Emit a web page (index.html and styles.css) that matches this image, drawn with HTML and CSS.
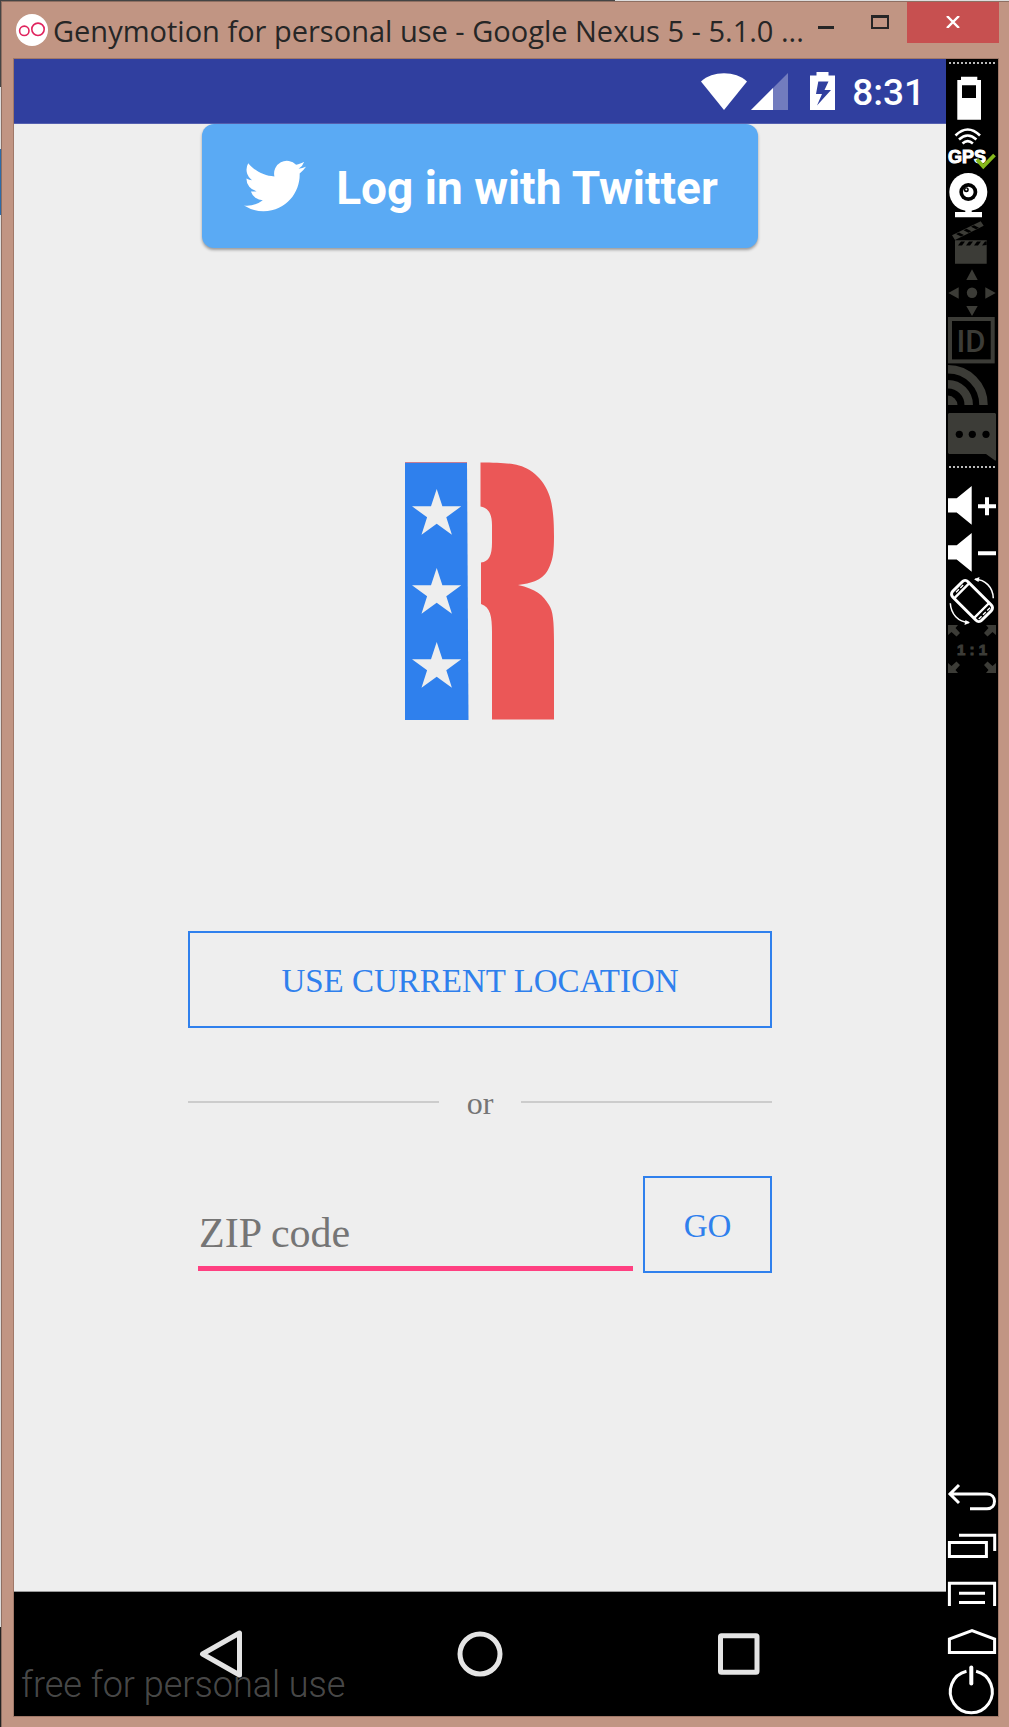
FILE: index.html
```html
<!DOCTYPE html>
<html lang="en">
<head>
<meta charset="utf-8">
<meta name="viewport" content="width=device-width, initial-scale=1">
<title>Genymotion for personal use - Google Nexus 5 - 5.1.0</title>
<link rel="stylesheet" href="styles.css">
</head>
<body>
<div class="window">
  <header class="titlebar">
    <svg class="app-icon" viewBox="0 0 32 32" aria-hidden="true">
      <circle cx="16" cy="16" r="16" fill="#fff"/>
      <g fill="none" stroke="#e0245e" stroke-width="1.6"><circle cx="8.3" cy="16.8" r="4.7"/><circle cx="22" cy="15.3" r="6.2"/></g>
    </svg>
    <h1 class="title">Genymotion for personal use - Google Nexus 5 - 5.1.0 ...</h1>
    <div class="controls">
      <button class="control minimize" aria-label="Minimize"><svg width="16" height="3" viewBox="0 0 16 3"><path d="M0 0h16v3H0z" fill="#262626"/></svg></button>
      <button class="control maximize" aria-label="Maximize"><svg width="18" height="14" viewBox="0 0 18 14"><path fill-rule="evenodd" d="M0 0h18v14H0zM2 3v9h14V3z" fill="#262626"/></svg></button>
      <button class="control close" aria-label="Close"><svg width="14" height="12" viewBox="0 0 14 12"><path d="M1 0l12 12M13 0L1 12" stroke="#fff" stroke-width="2.4"/></svg></button>
    </div>
  </header>

  <div class="device">
    <div class="screen">
      <div class="statusbar">
        <svg class="wifi" width="46" height="37" viewBox="0 0 46 37" aria-hidden="true"><path d="M23 37L0 8.5C6 3 14 .3 23 .3S40 3 46 8.500z" fill="#fff"/></svg>
        <svg class="signal" width="37" height="37" viewBox="0 0 37 37" aria-hidden="true"><path d="M0 37L37 0v37z" fill="#fff" opacity=".32"/><path d="M0 37L22 15v22z" fill="#fff"/></svg>
        <svg class="battery" width="25" height="38" viewBox="0 0 25 38" aria-hidden="true"><path fill-rule="evenodd" d="M6.500 0h12v3.500H25V38H0V3.500h6.500zM8.300 9.500L6 22h6L7 33.500 21 18h-6.500l4-8.500z" fill="#fff"/></svg>
        <time class="clock">8:31</time>
      </div>

      <main class="app">
        <button class="twitter">
          <svg class="bird" viewBox="0 0 24 24" aria-hidden="true"><path fill="#fff" d="M23.953 4.570a10 10 0 01-2.825.775 4.958 4.958 0 002.163-2.723c-.951.555-2.005.959-3.127 1.184a4.920 4.920 0 00-8.384 4.482C7.690 8.095 4.067 6.130 1.640 3.162a4.822 4.822 0 00-.666 2.475c0 1.710.870 3.213 2.188 4.096a4.904 4.904 0 01-2.228-.616v.060a4.923 4.923 0 003.946 4.827 4.996 4.996 0 01-2.212.085 4.936 4.936 0 004.604 3.417 9.867 9.867 0 01-6.102 2.105c-.390 0-.779-.023-1.170-.067a13.995 13.995 0 007.557 2.209c9.053 0 13.998-7.496 13.998-13.985 0-.210 0-.420-.015-.630A9.935 9.935 0 0024 4.590z"/></svg>
          <span class="twitter-label">Log in with Twitter</span>
        </button>

        <svg class="logo" width="150" height="258" viewBox="0 0 150 258" role="img" aria-label="R logo">
          <path fill="#2f80ed" d="M0 .5h62L63.500 258H0z"/>
          <path fill="#eb5757" opacity=".6" d="M0 0h62v1H0z"/>
          <g fill="#eee">
            <path id="star" d="M31.700 27l5.700 17.300h18.900L41.300 55.300l5.600 17.400-15.200-11-15.200 11 5.600-17.400L7 44.300h19z"/>
            <use href="#star" y="79"/>
            <use href="#star" y="153"/>
          </g>
          <path fill="#eb5757" d="M75.500.5C93 .7 105 1 114 3.500c15 4 29 18 32.500 38 2 11 2.500 20 2.500 33 0 14-1 22-4 29-5 13-14 17-32 19.500 18 4 25 10 31 20 4 6 5 16 5 37v77.500H87V170c0-15-1.500-25-11-28v-41.500c8-1 11-7 11-20V63c0-12-4-17-11.500-18.500z"/>
        </svg>

        <form class="location">
          <button type="button" class="outline wide">USE CURRENT LOCATION</button>
          <div class="divider"><span class="divider-label">or</span></div>
          <div class="zip-row">
            <input class="zip" type="text" aria-label="ZIP code" placeholder="ZIP code">
            <button type="button" class="outline go">GO</button>
          </div>
        </form>
      </main>

      <nav class="navbar" aria-label="Android navigation">
        <button aria-label="Back"><svg width="48" height="48" viewBox="0 0 48 48"><path d="M42.500 3v42L5.500 24z"/></svg></button>
        <button aria-label="Home"><svg width="48" height="48" viewBox="0 0 48 48"><circle cx="24" cy="24" r="20"/></svg></button>
        <button aria-label="Recent apps"><svg width="48" height="48" viewBox="0 0 48 48"><rect x="5.500" y="5.800" width="36.500" height="36.500" rx="1"/></svg></button>
        <span class="watermark">free for personal use</span>
      </nav>
    </div>

    <aside class="toolbar" aria-label="Emulator tools">
      <div class="dots"></div>
      <div class="tools">
        <button aria-label="Battery"><svg viewBox="0 0 48 48"><path fill="#fff" fill-rule="evenodd" d="M13 .7h16.300V4H33v39.700H9.300V4H13zM14 9.300V22h14V9.300z"/></svg></button>
        <button aria-label="GPS"><svg viewBox="0 0 48 48"><g fill="none" stroke="#fff" stroke-width="2.600"><path d="M7.500 11.500Q19.700-.5 32 11.500M11 15.500q8.700-8 17.400 0M14.500 19.500q5.200-4.600 10.400 0"/></g><text class="gps" x="0" y="39">GPS</text><path d="M29 35.500l6.300 7L46.500 31" fill="none" stroke="#86b81c" stroke-width="3.800"/></svg></button>
        <button aria-label="Camera"><svg viewBox="0 0 48 48"><circle cx="20.300" cy="20" r="19" fill="#fff"/><circle cx="20.300" cy="20" r="9"/><circle cx="20.300" cy="20" r="5.300" fill="#fff"/><circle cx="18.300" cy="17.700" r="2.500"/><circle cx="18.300" cy="17.500" r="1" fill="#fff"/><path d="M17.300 37h6.400v3H34v5.300H7V40h10.300z" fill="#fff"/></svg></button>
        <button aria-label="Screencast"><svg viewBox="0 0 48 48"><path fill="#3c3c37" d="M7 20.300h31.700v23.400H7zM4 15.300L32.700 1.300l3 4.400L7 20z"/><path d="M10 25.500l3-4h4l-3 4zM18 25.500l3-4h4l-3 4zM26 25.500l3-4h4l-3 4zM34 25.500l3-4h1.700v3.500zM8 14l5 2.500 3-1.500-5-2.500zM15.500 10.300l5 2.500 3-1.500-5-2.500zM23 6.700l5 2.500 3-1.500-5-2.500z"/></svg></button>
        <button aria-label="Directional pad"><svg viewBox="0 0 48 48"><path fill="#3c3c37" d="M24 1.300L29.700 12H18.300zM.3 25l10.400-5.700v11.400zM47.700 25l-10.400-5.700v11.400zM18.300 38h11.400L24 48z"/><circle cx="24" cy="24.700" r="5.200" fill="#3c3c37"/></svg></button>
        <button aria-label="Identifiers"><svg viewBox="0 0 48 48"><rect x="2" y="3" width="42.700" height="42.400" fill="none" stroke="#3c3c37" stroke-width="4"/><text class="id" x="8.500" y="36">ID</text></svg></button>
        <button aria-label="Network"><svg viewBox="0 0 48 48"><path fill="none" stroke="#3c3c37" stroke-width="8.500" d="M0 5.300A35.500 35.500 0 0135.500 41M0 20.300A20.700 20.700 0 0120.700 41"/><path fill="#3c3c37" d="M0 31.500A10 10 0 019.500 41H0z"/></svg></button>
        <button aria-label="Phone"><svg viewBox="0 0 48 48"><path fill="#3c3c37" d="M1 1h46l1 1v46.500h-1L38 42H1l-1-1V2z"/><circle cx="11.300" cy="22.300" r="3.600"/><circle cx="24.300" cy="22.300" r="3.600"/><circle cx="38" cy="22.300" r="3.600"/></svg></button>
      </div>
      <div class="dots"></div>
      <div class="tools">
        <button aria-label="Volume up"><svg viewBox="0 0 48 48"><path fill="#fff" d="M0 17.300h8.700L23.700 5v38.700L8.700 31.500H0zM30 23.200h7v-7h4v7h7v4h-7v7h-4v-7h-7z"/></svg></button>
        <button aria-label="Volume down"><svg viewBox="0 0 48 48"><path fill="#fff" d="M0 16.300h8.700L23.700 4v38.700L8.700 30.500H0zM30 22.300h18v4H30z"/></svg></button>
        <button aria-label="Rotate screen"><svg viewBox="0 0 48 48"><g fill="none" stroke="#fff"><g transform="rotate(-45 24 24)"><rect x="13.200" y="3.500" width="21.600" height="41" rx="4" stroke-width="3"/><path d="M14 9.500h20M14 37.500h20" stroke-width="2.400"/><path d="M19 6.500h10M16 41.500h16" stroke-width="1.400" stroke-dasharray="4 2"/></g><path d="M45.300 21.300C45 10 37 2.500 27 2.300M2.300 26.300C3 37 10 45 21 45.500" stroke-width="1.500"/></g><path fill="#fff" d="M26 2.300L31.500 0l-1 5zM22 45.700L16.500 48l1-5z"/></svg></button>
        <button aria-label="Pixel perfect"><svg viewBox="0 0 48 48"><path id="arrow" fill="#3c3c37" d="M0 0h10L7.500 3l4.500 5-3.500 3.500L3.500 7 0 10z"/><use href="#arrow" transform="matrix(-1 0 0 1 48 0)"/><use href="#arrow" transform="matrix(1 0 0 -1 0 48)"/><use href="#arrow" transform="matrix(-1 0 0 -1 48 48)"/><text class="ratio" x="24" y="30">1 : 1</text></svg></button>
      </div>
      <div class="tools system">
        <button aria-label="Back"><svg class="line" viewBox="0 0 48 48"><path d="M11 11L2 20l9 9M1 20h38c10 0 10 14.700 0 14.700H22"/></svg></button>
        <button aria-label="Recent apps"><svg class="line" viewBox="0 0 48 48"><path d="M1.400 20.400h37v14h-37zM11 13.300h35.700V29"/></svg></button>
        <button aria-label="Menu"><svg class="line" viewBox="0 0 48 48"><path d="M1.400 36V13.300h45.200V36M11 23.300h26M11 32.500h26"/></svg></button>
        <button aria-label="Home"><svg class="line" viewBox="0 0 48 48"><path d="M1.400 34.600V21L24 12.500 46.600 21v13.600z"/></svg></button>
        <button aria-label="Power"><svg class="line" viewBox="0 0 48 48"><path d="M18.500 5.300a21 21 0 1 0 9.600 0"/><path d="M23.300 1.500v16" stroke-width="4" stroke-linecap="round"/></svg></button>
      </div>
    </aside>
  </div>
</div>
</body>
</html>
```
FILE: styles.css
```css
* { box-sizing: border-box; }

html { height: 100%; }

body {
  margin: 0;
  min-height: 100%;
  display: flex;
  padding: 1px 0 0 1px;
  background:
    linear-gradient(#444 0 87px, #ddd 87px 149px, #2d6aa8 149px 215px, #ddd 215px 1627px, #222 1627px) 0 0 / 1px 100% no-repeat,
    linear-gradient(90deg, #444 0 61%, #ddd 61%);
}

button {
  margin: 0;
  padding: 0;
  border: 0;
  background: none;
  font: inherit;
  color: inherit;
}

svg { display: block; }

.window {
  flex: 1;
  min-width: 0;
  display: flex;
  flex-direction: column;
  padding: 0 10px 10px 11px;
  background: #c19583;
  border-top: 1px solid #8e6f62;
  border-left: 1px solid #8e6f62;
}

/* Title bar */
.titlebar {
  display: flex;
  height: 56px;
  padding-left: 3px;
}

.app-icon {
  flex: none;
  width: 32px;
  height: 32px;
  margin-top: 12px;
}

.title {
  flex: 1;
  min-width: 0;
  margin: 0;
  padding: 9px 0 0 5px;
  white-space: nowrap;
  font: 400 29px/40px "Open Sans", sans-serif;
  color: #262626;
}

.controls { display: flex; }

.control {
  display: flex;
  justify-content: center;
  width: 54px;
  height: 41px;
}

.minimize { padding-top: 24px; }
.maximize { padding-top: 13px; }

.close {
  width: 92px;
  padding-top: 14px;
  background: #c75050;
}

/* Device */
.device {
  flex: 1;
  display: flex;
  border: 1px solid #a07868;
}

.screen {
  flex: 1;
  min-width: 0;
  display: flex;
  flex-direction: column;
  background: #eee;
}

.statusbar {
  display: flex;
  align-items: center;
  justify-content: flex-end;
  height: 65px;
  padding-right: 21px;
  background: #303f9f;
  border-bottom: 1px solid #5560b0;
}

.signal { margin-left: 4px; }
.battery { margin-left: 22px; }

.clock {
  margin-left: 17px;
  padding-top: 4px;
  font: 500 37px/48px Roboto, sans-serif;
  color: #fff;
}

.app {
  flex: 1;
  display: flex;
  flex-direction: column;
  align-items: center;
}

.twitter {
  display: flex;
  align-items: center;
  height: 124px;
  padding: 0 40px 0 42px;
  border-radius: 12px;
  background: #5aaaf4;
  box-shadow: 0 2px 3px rgba(0, 0, 0, .35);
  font: 700 46px/60px Roboto, sans-serif;
  color: #fff;
}

.bird {
  width: 62px;
  height: 62px;
  margin-right: 30px;
}

.twitter-label { padding-top: 4px; }

.logo { margin-top: 214px; }

.location {
  width: 584px;
  max-width: 100%;
  margin-top: 211px;
  font: 33px/36px "Liberation Serif", serif;
}

.outline {
  height: 97px;
  padding-top: 2px;
  border: 2px solid #2f80ed;
  color: #2f80ed;
}

.wide { width: 100%; }

.divider {
  display: flex;
  align-items: center;
  gap: 28px;
  margin: 55px 0;
  font-size: 32px;
  color: #757575;
}

.divider-label { padding-top: 2px; }

.divider::before,
.divider::after {
  content: "";
  flex: 1;
  height: 2px;
  background: #ccc;
}

.zip-row {
  display: flex;
  align-items: flex-end;
  gap: 10px;
  padding-left: 10px;
}

.zip {
  flex: 1;
  min-width: 0;
  height: 72px;
  margin: 0 0 2px;
  padding: 0 1px;
  border: 0;
  border-bottom: 5px solid #ff4081;
  border-radius: 0;
  outline: 0;
  background: none;
  font: 42px/48px "Liberation Serif", serif;
  color: #212121;
}

.zip::placeholder {
  color: #757575;
  opacity: 1;
}

.go { width: 129px; }

/* Android navigation */
.navbar {
  position: relative;
  display: flex;
  justify-content: center;
  height: 125px;
  background: #000;
  border-top: 1px solid #999;
}

.navbar button {
  display: flex;
  align-items: center;
  justify-content: center;
  width: 259px;
}

.navbar svg {
  fill: none;
  stroke: #e4e4e4;
  stroke-width: 5;
  stroke-linejoin: round;
}

.watermark {
  position: absolute;
  left: 7px;
  bottom: 7px;
  font: 300 36px/48px Roboto, sans-serif;
  color: rgba(255, 255, 255, .3);
  pointer-events: none;
}

/* Emulator toolbar */
.toolbar {
  display: flex;
  flex-direction: column;
  width: 52px;
  padding: 3px 2px 2px;
  background: #000;
}

.dots {
  height: 2px;
  margin: 0 1px 12px;
  background: repeating-linear-gradient(90deg, #bbb 0 2px, #000 2px 4px);
}

.tools {
  display: flex;
  flex-direction: column;
}

.tools + .dots { margin: 6px 1px 13px; }
.system { margin-top: auto; }

.tools svg {
  width: 48px;
  height: 48px;
  overflow: visible;
}

.line {
  fill: none;
  stroke: #fff;
  stroke-width: 3;
}

.gps {
  font: 700 18px "Liberation Sans", sans-serif;
  fill: #fff;
  stroke: #fff;
  stroke-width: 1;
}

.id {
  font: 500 31px Roboto, sans-serif;
  fill: #3c3c37;
}

.ratio {
  font: 700 15px "Liberation Sans", sans-serif;
  text-anchor: middle;
  fill: #3c3c37;
  stroke: #3c3c37;
  stroke-width: 1;
}
```
